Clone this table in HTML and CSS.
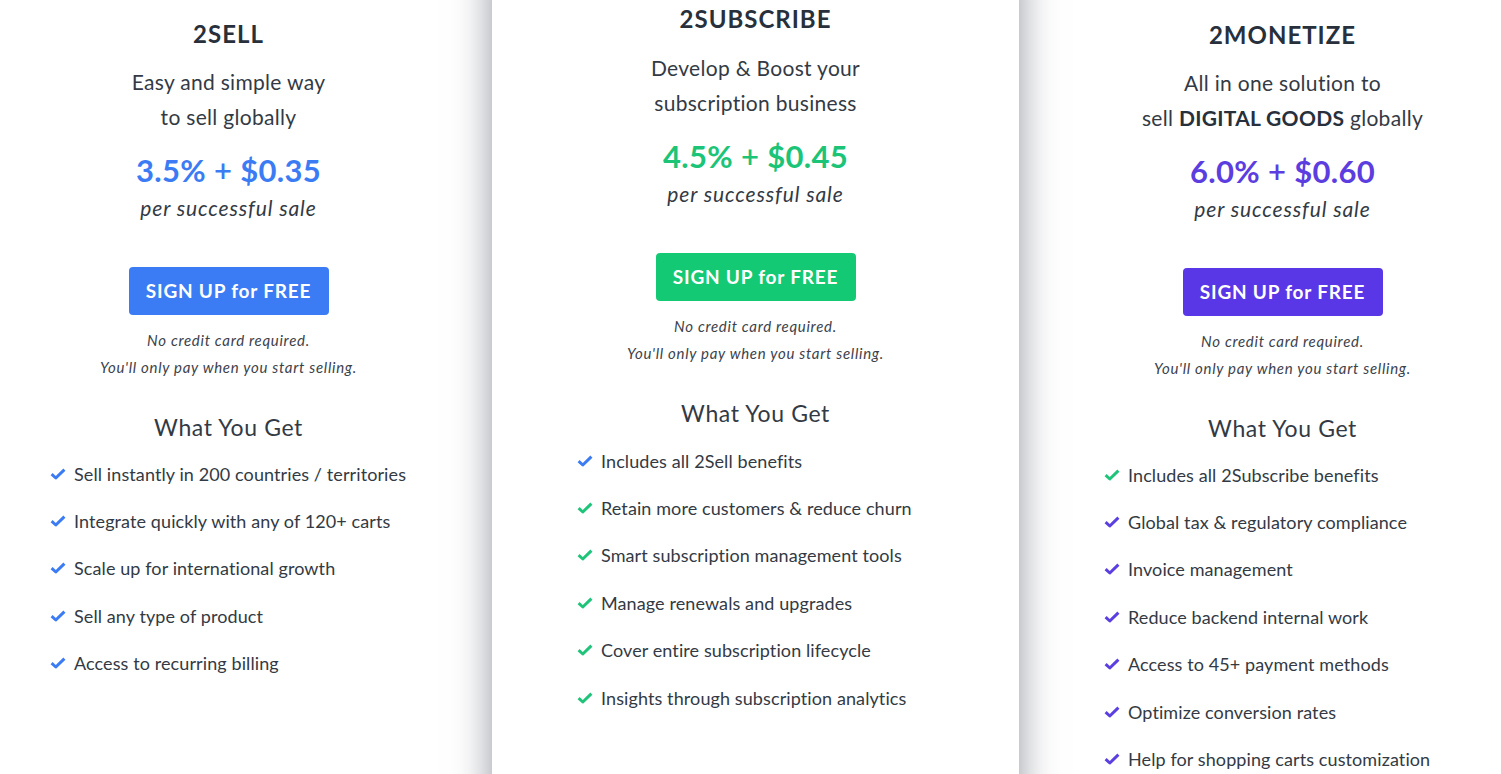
FILE: index.html
```html
<!DOCTYPE html>
<html lang="en">
<head>
    <meta charset="UTF-8">
    <meta name="viewport" content="width=device-width, initial-scale=1.0">
    <title>Pricing</title>
    <link rel="stylesheet" href="styles.css">
</head>
<body>
    <div class="plans">
        <div class="plan plan-sell">
            <h2 class="plan-title">2SELL</h2>
            <p class="plan-desc">Easy and simple way<br>to sell globally</p>
            <div class="plan-price"><b>3.5%</b> + <b>$0.35</b></div>
            <p class="plan-per">per successful sale</p>
            <a class="plan-btn" href="#">SIGN UP for FREE</a>
            <p class="plan-note">No credit card required.<br>You'll only pay when you start selling.</p>
            <h3 class="plan-get">What You Get</h3>
            <ul class="plan-list">
                <li class="blue">Sell instantly in 200 countries / territories</li>
                <li class="blue">Integrate quickly with any of 120+ carts</li>
                <li class="blue">Scale up for international growth</li>
                <li class="blue">Sell any type of product</li>
                <li class="blue">Access to recurring billing</li>
            </ul>
        </div>

        <div class="plan plan-subscribe">
            <h2 class="plan-title">2SUBSCRIBE</h2>
            <p class="plan-desc">Develop &amp; Boost your<br>subscription business</p>
            <div class="plan-price"><b>4.5%</b> + <b>$0.45</b></div>
            <p class="plan-per">per successful sale</p>
            <a class="plan-btn" href="#">SIGN UP for FREE</a>
            <p class="plan-note">No credit card required.<br>You'll only pay when you start selling.</p>
            <h3 class="plan-get">What You Get</h3>
            <ul class="plan-list">
                <li class="blue">Includes all 2Sell benefits</li>
                <li class="green">Retain more customers &amp; reduce churn</li>
                <li class="green">Smart subscription management tools</li>
                <li class="green">Manage renewals and upgrades</li>
                <li class="green">Cover entire subscription lifecycle</li>
                <li class="green">Insights through subscription analytics</li>
            </ul>
        </div>

        <div class="plan plan-monetize">
            <h2 class="plan-title">2MONETIZE</h2>
            <p class="plan-desc">All in one solution to<br>sell <strong>DIGITAL GOODS</strong> globally</p>
            <div class="plan-price"><b>6.0%</b> + <b>$0.60</b></div>
            <p class="plan-per">per successful sale</p>
            <a class="plan-btn" href="#">SIGN UP for FREE</a>
            <p class="plan-note">No credit card required.<br>You'll only pay when you start selling.</p>
            <h3 class="plan-get">What You Get</h3>
            <ul class="plan-list">
                <li class="green">Includes all 2Subscribe benefits</li>
                <li class="purple">Global tax &amp; regulatory compliance</li>
                <li class="purple">Invoice management</li>
                <li class="purple">Reduce backend internal work</li>
                <li class="purple">Access to 45+ payment methods</li>
                <li class="purple">Optimize conversion rates</li>
                <li class="purple">Help for shopping carts customization</li>
            </ul>
        </div>
    </div>
</body>
</html>
```

FILE: styles.css
```css
body {
    margin: 0;
    background-color: #ffffff;
    color: #333a44;
    font-family: Lato, "Open Sans", sans-serif;
    overflow: hidden;
}
.plans {
    display: grid;
    grid-template-columns: 527px 527px 527px;
    margin-left: -35px;
    width: 1581px;
}
.plan {
    display: flex;
    flex-direction: column;
    align-items: center;
    text-align: center;
    padding-top: 20px;
    height: 820px;
}
.plan-subscribe {
    position: relative;
    z-index: 1;
    background-color: #ffffff;
    margin-top: -40px;
    padding-top: 45px;
    box-shadow: 0 0 36px rgba(40, 48, 66, 0.5);
}
.plan-monetize {
    padding-top: 21px;
}
.plan-title {
    margin: 0;
    font-size: 24px;
    line-height: 28px;
    font-weight: 700;
    letter-spacing: 1px;
    color: #27303b;
}
.plan-desc {
    margin: 16px 0 0;
    font-size: 21px;
    line-height: 35px;
    letter-spacing: 0.3px;
}
.plan-subscribe .plan-desc {
    margin-top: 17px;
}
.plan-desc strong {
    font-weight: 700;
    color: #27303b;
}
.plan-price {
    margin-top: 18px;
    font-size: 31px;
    line-height: 36px;
    font-weight: 600;
    letter-spacing: 0.3px;
}
.plan-price b {
    font-weight: 700;
}
.plan-per {
    margin: 6px 0 0;
    font-size: 21px;
    line-height: 28px;
    font-style: italic;
    letter-spacing: 0.9px;
}
.plan-btn {
    display: block;
    margin-top: 45px;
    width: 200px;
    height: 48px;
    line-height: 48px;
    border-radius: 4px;
    color: #ffffff;
    font-size: 19px;
    font-weight: 700;
    letter-spacing: 0.8px;
    text-decoration: none;
}
.plan-note {
    margin: 12px 0 0;
    font-size: 15px;
    line-height: 27px;
    font-style: italic;
    letter-spacing: 0.7px;
    color: #3c424b;
}
.plan-get {
    margin: 32px 0 0;
    font-size: 23px;
    line-height: 28px;
    font-weight: 400;
    letter-spacing: 0.6px;
}
.plan-list {
    align-self: stretch;
    list-style: none;
    margin: 9px 0 0;
    padding: 0 0 0 85px;
    text-align: left;
}
.plan-subscribe .plan-list {
    margin-top: 10px;
}
.plan-list li {
    display: flex;
    align-items: center;
    gap: 8px;
    height: 47.4px;
    font-size: 18px;
    letter-spacing: 0.1px;
}
.plan-list li::before {
    content: "";
    width: 16px;
    height: 12px;
    flex: none;
    background-color: currentColor;
    -webkit-mask: url("data:image/svg+xml;utf8,<svg xmlns='http://www.w3.org/2000/svg' viewBox='0 0 16 12'><path d='M1.6 6.2 L5.8 10 L14.4 1.6' fill='none' stroke='black' stroke-width='3' stroke-linejoin='round'/></svg>") no-repeat center / contain;
}
.plan-list li.blue::before { background-color: #3b7cf4; }
.plan-list li.green::before { background-color: #1fc47a; }
.plan-list li.purple::before { background-color: #5b3fe0; }

.plan-sell .plan-price { color: #3b7cf4; }
.plan-sell .plan-btn { background-color: #3b7cf4; }
.plan-subscribe .plan-price { color: #1cc477; }
.plan-subscribe .plan-btn { background-color: #14c974; }
.plan-monetize .plan-price { color: #5b3de0; }
.plan-monetize .plan-btn { background-color: #5a37e6; }
```
